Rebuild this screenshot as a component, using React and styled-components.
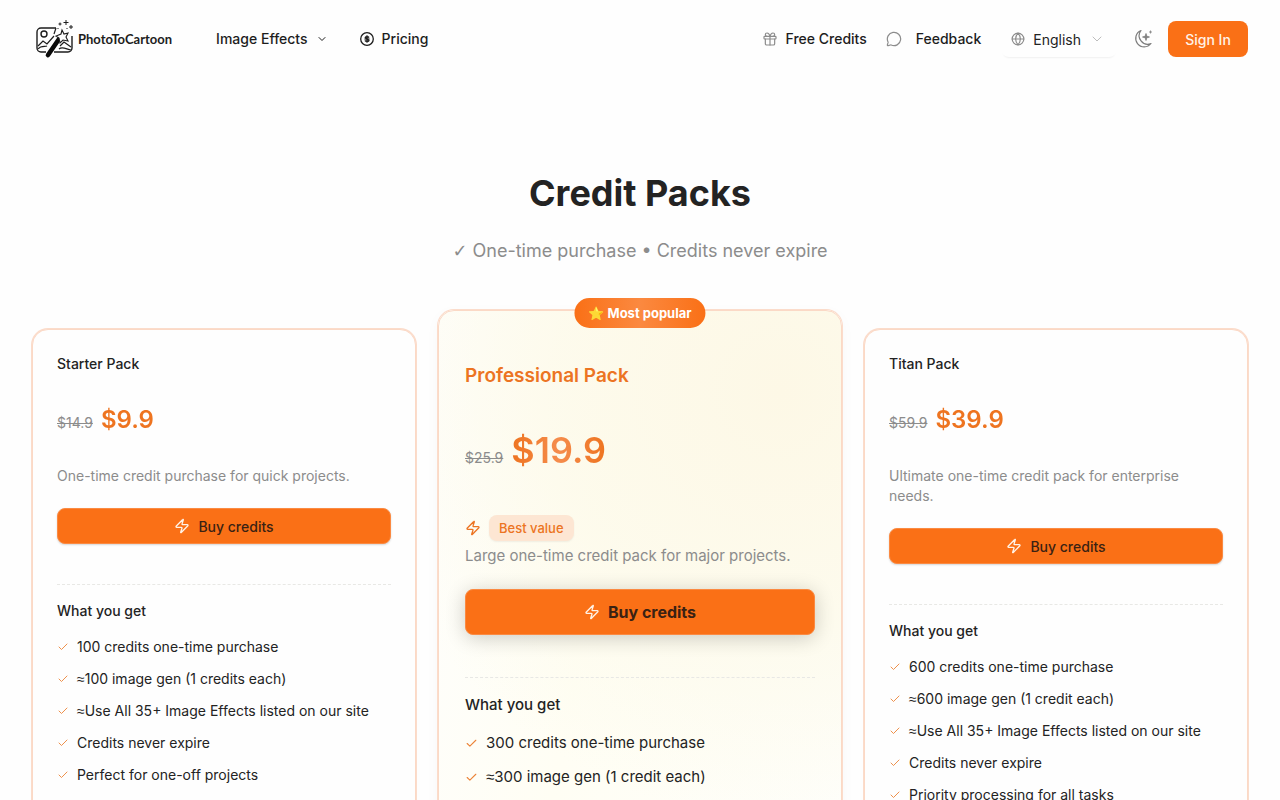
import React from 'react';
import styled, { createGlobalStyle } from 'styled-components';
import { ChevronDown, Gift, MessageCircle, Globe, Zap, Check } from 'lucide-react';

const GlobalStyle = createGlobalStyle`
  * {
    box-sizing: border-box;
  }
  html {
    scrollbar-width: none;
  }
  body {
    margin: 0;
    background: #fefefe;
    color: #232323;
    font-family: Inter, sans-serif;
    font-size: 14px;
    line-height: 20px;
  }
  svg {
    display: block;
    flex: none;
  }
`;

const Header = styled.header`
  display: flex;
  align-items: center;
  height: 78px;
  padding: 0 32px;
`;

const Logo = styled.a`
  display: flex;
  align-items: center;
  gap: 4px;
  padding-left: 4px;
  margin-right: 44px;
  color: #1d1d1d;
  font-family: Lato, sans-serif;
  font-size: 13px;
  font-weight: 700;
  text-decoration: none;
`;

const Nav = styled.nav`
  display: flex;
  align-items: center;
  gap: 32px;
  flex: 1;
`;

const Actions = styled.div`
  display: flex;
  align-items: center;
`;

const NavLink = styled.a`
  display: flex;
  align-items: center;
  gap: ${(props) => props.$gap || 8}px;
  margin-right: ${(props) => props.$after || 0}px;
  color: #1d1d1d;
  font-weight: 500;
  text-decoration: none;
  svg {
    color: ${(props) => (props.$muted ? '#8c8c8c' : 'inherit')};
  }
`;

const NavButton = styled.button`
  display: flex;
  align-items: center;
  gap: 8px;
  padding: 0;
  border: 0;
  background: none;
  color: #1d1d1d;
  font-family: inherit;
  font-size: 14px;
  font-weight: 500;
  line-height: 20px;
`;

const Language = styled.button`
  display: flex;
  align-items: center;
  gap: 8px;
  height: 36px;
  padding: 0 12px 0 10px;
  margin-right: 16px;
  border: 0;
  border-radius: 8px;
  background: #fefefe;
  box-shadow: 0 3px 2px -2px rgba(0, 0, 0, 0.06);
  color: #232323;
  font-family: inherit;
  font-size: 14px;
  svg {
    color: #8c8c8c;
  }
  svg:last-child {
    color: #bdbdbd;
  }
`;

const ThemeButton = styled.button`
  padding: 0;
  margin-right: 15px;
  border: 0;
  background: none;
  color: #7d7d7d;
`;

const SignIn = styled.button`
  min-width: 80px;
  height: 36px;
  padding: 0 16px;
  border: 0;
  border-radius: 8px;
  background: #fa7016;
  color: #fff3e8;
  font-family: inherit;
  font-size: 14px;
  font-weight: 500;
`;

const Main = styled.main`
  padding: 93px 32px 0;
`;

const Title = styled.h1`
  margin: 0;
  font-size: 36px;
  line-height: 44px;
  font-weight: 700;
  text-align: center;
`;

const Subtitle = styled.p`
  margin: 22px 0 64px;
  color: #8c8c8c;
  font-size: 18px;
  line-height: 28px;
  text-align: center;
`;

const Tick = styled.span`
  font-family: "DejaVu Sans", sans-serif;
  line-height: 1;
`;

const Approx = styled.span`
  font-family: "Liberation Sans", sans-serif;
`;

const Packs = styled.section`
  display: grid;
  grid-template-columns: repeat(3, minmax(0, 1fr));
  gap: 32px;
`;

const Card = styled.article`
  position: relative;
  padding: 24px;
  border: 1px solid #fbd9c6;
  border-radius: 16px;
  background: #fefefe;
  box-shadow: 0 0 0 1px #fbdccb;
`;

const FeaturedCard = styled(Card)`
  margin: -19px -10px;
  padding: 51px 26px 24px;
  background:
    radial-gradient(circle at 85% 15%, #fdf8e6, rgba(253, 250, 234, 0.8) 40%, rgba(254, 254, 250, 0) 75%),
    linear-gradient(100deg, #fefefc, #fffef4 40%, #fefefa);
  box-shadow: 0 0 0 1px #fbdccb, 0 4px 16px rgba(0, 0, 0, 0.03);
`;

const Popular = styled.div`
  position: absolute;
  top: -13px;
  left: 50%;
  transform: translateX(-50%);
  padding: 5px 14px;
  border-radius: 15px;
  background: linear-gradient(90deg, #fa7016, #fb8940 50%, #fa7016);
  color: #fff;
  font-size: 13px;
  font-weight: 700;
  white-space: nowrap;
`;

const PackName = styled.h2`
  margin: 0 0 ${(props) => (props.$large ? 39 : 30)}px;
  color: ${(props) => (props.$large ? '#ec7422' : 'inherit')};
  font-size: ${(props) => (props.$large ? 19 : 14)}px;
  line-height: ${(props) => (props.$large ? 28 : 20)}px;
  font-weight: ${(props) => (props.$large ? 600 : 500)};
`;

const PriceRow = styled.div`
  display: flex;
  align-items: baseline;
  gap: 8px;
  margin-bottom: ${(props) => (props.$large ? 44 : 30)}px;
`;

const OldPrice = styled.s`
  color: #8c8c8c;
`;

const Price = styled.span`
  font-size: ${(props) => (props.$large ? 36 : 24)}px;
  line-height: ${(props) => (props.$large ? 42 : 32)}px;
  font-weight: 600;
  color: transparent;
  background: ${(props) => (props.$large
    ? 'linear-gradient(90deg, #ee7420, #f58c4c 50%, #ee7420)'
    : '#ee7420')};
  background-clip: text;
`;

const ValueRow = styled.div`
  display: flex;
  align-items: center;
  gap: 8px;
  margin-bottom: 4px;
  color: #ec7422;
`;

const ValueTag = styled.span`
  padding: 3px 10px;
  border-radius: 8px;
  background: #fde6d3;
  box-shadow: 0 1px 2px rgba(0, 0, 0, 0.06);
  font-size: 13px;
  font-weight: 500;
`;

const Description = styled.p`
  margin: 0 0 22px;
  color: #8c8c8c;
  font-size: ${(props) => (props.$large ? 15 : 14)}px;
  line-height: ${(props) => (props.$large ? 22 : 20)}px;
`;

const BuyButton = styled.button`
  display: flex;
  align-items: center;
  justify-content: center;
  gap: 8px;
  width: 100%;
  height: ${(props) => (props.$large ? 46 : 36)}px;
  border: 1px solid #fb8a42;
  border-radius: 8px;
  background: #fa7016;
  box-shadow: ${(props) => (props.$large
    ? '0 3px 20px rgba(0, 0, 0, 0.2)'
    : '0 1px 2px rgba(0, 0, 0, 0.16)')};
  color: #3a2213;
  font-family: inherit;
  font-size: ${(props) => (props.$large ? 16 : 14)}px;
  font-weight: ${(props) => (props.$large ? 700 : 500)};
  svg {
    color: #fff3e8;
  }
`;

const Benefits = styled.div`
  margin-top: ${(props) => (props.$large ? 42 : 40)}px;
  padding-top: 16px;
  border-top: 1px dashed #e8e8e5;
  font-size: ${(props) => (props.$large ? 15 : 14)}px;
  line-height: ${(props) => (props.$large ? 22 : 20)}px;
`;

const BenefitsTitle = styled.h3`
  margin: 0 0 16px;
  font-size: inherit;
  font-weight: 500;
`;

const BenefitList = styled.ul`
  display: flex;
  flex-direction: column;
  gap: 12px;
  margin: 0;
  padding: 0;
  list-style: none;
`;

const Benefit = styled.li`
  display: flex;
  align-items: center;
  gap: 8px;
  svg {
    color: #ec8438;
  }
`;

const packs = [
  {
    name: 'Starter Pack',
    oldPrice: '$14.9',
    price: '$9.9',
    description: 'One-time credit purchase for quick projects.',
    benefits: [
      '100 credits one-time purchase',
      '≈100 image gen (1 credits each)',
      '≈Use All 35+ Image Effects listed on our site',
      'Credits never expire',
      'Perfect for one-off projects',
    ],
  },
  {
    name: 'Professional Pack',
    oldPrice: '$25.9',
    price: '$19.9',
    description: 'Large one-time credit pack for major projects.',
    featured: true,
    benefits: [
      '300 credits one-time purchase',
      '≈300 image gen (1 credit each)',
    ],
  },
  {
    name: 'Titan Pack',
    oldPrice: '$59.9',
    price: '$39.9',
    description: 'Ultimate one-time credit pack for enterprise needs.',
    benefits: [
      '600 credits one-time purchase',
      '≈600 image gen (1 credit each)',
      '≈Use All 35+ Image Effects listed on our site',
      'Credits never expire',
      'Priority processing for all tasks',
    ],
  },
];

const LogoMark = () => (
  <svg width="38" height="40" viewBox="0 0 38 40" fill="none" stroke="#1d1d1d" strokeWidth="1.4">
    <path d="M20 9H5a4 4 0 0 0-4 4v16a4 4 0 0 0 4 4h5M18 33h14a4 4 0 0 0 4-4V17" />
    <circle cx="8" cy="15" r="3" />
    <path d="M2 27l5-5 4 3 7-8M2 30c3-4 7-2 9-3" strokeWidth="1.2" />
    <path d="M24 27l4-4 7 5M23 30c3-3 7 0 12 1M20 9l-2 6" strokeWidth="1.2" />
    <path d="M23 20L12 36" stroke="#0a0a0a" strokeWidth="4.600" strokeLinecap="round" />
    <path d="M26 11l2 4 4-1-2 4 2 4-5-1-3 3-1-5-3-2 5-2z" fill="#fefefe" strokeWidth="1.1" />
    <path d="M30 1v5M27.500 3.500h5M24 3.500v3M22.500 5h3M35 6v4M33 8h4M22 9v1M31 9v1" strokeWidth="1" />
  </svg>
);

const CoinIcon = () => (
  <svg width="14" height="14" viewBox="0 0 14 14" fill="none" stroke="currentColor">
    <circle cx="7" cy="7" r="6.3" strokeWidth="1.3" />
    <circle cx="7" cy="7" r="2.600" fill="#777" stroke="none" />
    <path d="M9 5.300c-.7-1-3.800-1-3.800.3S9 7 9 8.400 5.700 9.800 5 8.700M7 3.200v7.600" strokeWidth="1.2" />
  </svg>
);

const MoonIcon = () => (
  <svg width="20" height="20" viewBox="0 0 20 20" fill="none" stroke="currentColor" strokeWidth="1.2" strokeLinejoin="round">
    <path d="M8 1.500A8.500 8.500 0 1 0 18 14.500 8.500 8.500 0 0 1 8 1.500z" />
    <path d="M13 4.500l.8 2.700 2.700.8-2.700.8-.8 2.700-.8-2.700-2.700-.8 2.700-.8zM17.500 1.500v3M16 3h3" fill="currentColor" strokeWidth=".8" />
  </svg>
);

const renderBenefit = (text) => {
  if (text[0] !== '≈') {
    return <span>{text}</span>;
  }
  return <span><Approx>≈</Approx>{text.slice(1)}</span>;
};

const PackCard = ({ pack }) => {
  const large = pack.featured;
  const Wrapper = large ? FeaturedCard : Card;

  return (
    <Wrapper>
      {large && <Popular>⭐ Most popular</Popular>}
      <PackName $large={large}>{pack.name}</PackName>
      <PriceRow $large={large}>
        <OldPrice>{pack.oldPrice}</OldPrice>
        <Price $large={large}>{pack.price}</Price>
      </PriceRow>
      {large && (
        <ValueRow>
          <Zap size={16} />
          <ValueTag>Best value</ValueTag>
        </ValueRow>
      )}
      <Description $large={large}>{pack.description}</Description>
      <BuyButton $large={large}>
        <Zap size={16} />
        Buy credits
      </BuyButton>
      <Benefits $large={large}>
        <BenefitsTitle>What you get</BenefitsTitle>
        <BenefitList>
          {pack.benefits.map((benefit) => (
            <Benefit key={benefit}>
              <Check size={large ? 13 : 12} strokeWidth={large ? 2 : 1.8} />
              {renderBenefit(benefit)}
            </Benefit>
          ))}
        </BenefitList>
      </Benefits>
    </Wrapper>
  );
};

const App = () => (
  <>
    <GlobalStyle />
    <Header>
      <Logo href="#">
        <LogoMark />
        PhotoToCartoon
      </Logo>
      <Nav>
        <NavButton>
          Image Effects
          <ChevronDown size={12} />
        </NavButton>
        <NavLink href="#pricing">
          <CoinIcon />
          Pricing
        </NavLink>
      </Nav>
      <Actions>
        <NavLink href="#credits" $muted $after={19}>
          <Gift size={16} strokeWidth={1.8} />
          Free Credits
        </NavLink>
        <NavLink href="#feedback" $muted $gap={14} $after={20}>
          <MessageCircle size={16} strokeWidth={1.8} />
          Feedback
        </NavLink>
        <Language>
          <Globe size={14} />
          English
          <ChevronDown size={16} strokeWidth={1.5} />
        </Language>
        <ThemeButton aria-label="Switch theme">
          <MoonIcon />
        </ThemeButton>
        <SignIn>Sign In</SignIn>
      </Actions>
    </Header>
    <Main>
      <Title>Credit Packs</Title>
      <Subtitle><Tick>✓</Tick> One-time purchase • Credits never expire</Subtitle>
      <Packs>
        {packs.map((pack) => (
          <PackCard key={pack.name} pack={pack} />
        ))}
      </Packs>
    </Main>
  </>
);

export default App;
